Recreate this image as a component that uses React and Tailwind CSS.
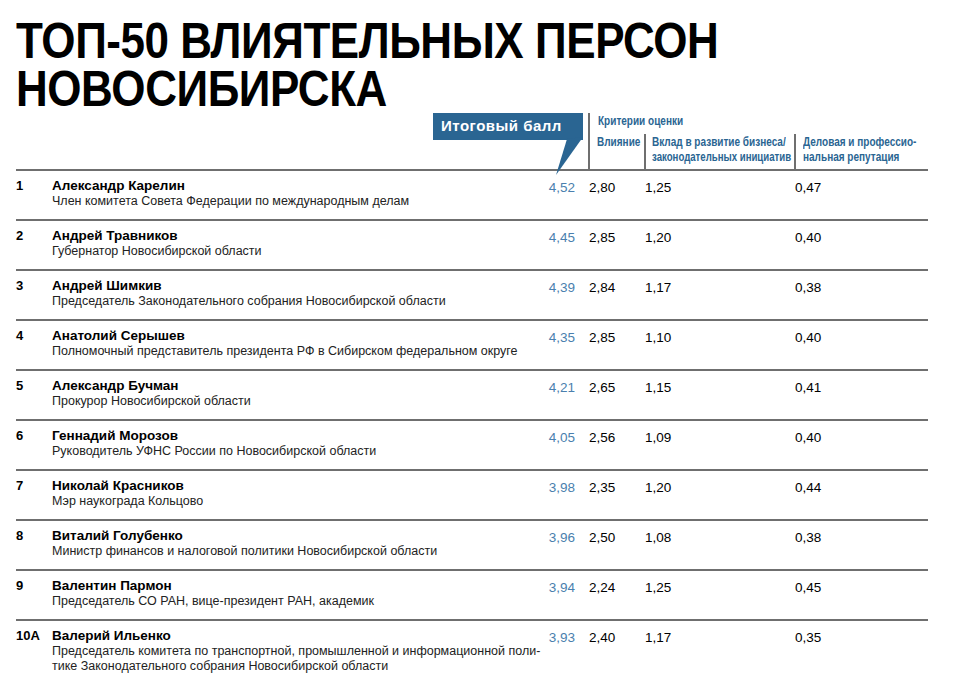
import React from "react";

const rows = [
  ["1", "Александр Карелин", ["Член комитета Совета Федерации по международным делам"], "4,52", "2,80", "1,25", "0,47"],
  ["2", "Андрей Травников", ["Губернатор Новосибирской области"], "4,45", "2,85", "1,20", "0,40"],
  ["3", "Андрей Шимкив", ["Председатель Законодательного собрания Новосибирской области"], "4,39", "2,84", "1,17", "0,38"],
  ["4", "Анатолий Серышев", ["Полномочный представитель президента РФ в Сибирском федеральном округе"], "4,35", "2,85", "1,10", "0,40"],
  ["5", "Александр Бучман", ["Прокурор Новосибирской области"], "4,21", "2,65", "1,15", "0,41"],
  ["6", "Геннадий Морозов", ["Руководитель УФНС России по Новосибирской области"], "4,05", "2,56", "1,09", "0,40"],
  ["7", "Николай Красников", ["Мэр наукограда Кольцово"], "3,98", "2,35", "1,20", "0,44"],
  ["8", "Виталий Голубенко", ["Министр финансов и налоговой политики Новосибирской области"], "3,96", "2,50", "1,08", "0,38"],
  ["9", "Валентин Пармон", ["Председатель СО РАН, вице-президент РАН, академик"], "3,94", "2,24", "1,25", "0,45"],
  ["10А", "Валерий Ильенко", ["Председатель комитета по транспортной, промышленной и информационной поли-", "тике Законодательного собрания Новосибирской области"], "3,93", "2,40", "1,17", "0,35"],
];

function Cond({ children }) {
  return (
    <span className="inline-block origin-left scale-x-[0.77] whitespace-nowrap">{children}</span>
  );
}

function CondTight({ children }) {
  return (
    <span className="inline-block origin-left scale-x-[0.74] whitespace-nowrap">{children}</span>
  );
}

export default function App() {
  return (
    <div className="w-[957px] h-[673px] overflow-hidden bg-white pl-4 text-black" style={{ fontFamily: '"Liberation Sans", Arial, sans-serif' }}>
      <div className="w-[912px]">
        <h1 className="pt-[17px] text-[50px] leading-[48px] font-bold tracking-[-0.5px] text-black whitespace-nowrap">
          <span className="inline-block origin-left scale-x-[0.88]">ТОП-50 ВЛИЯТЕЛЬНЫХ ПЕРСОН</span>
          <br />
          <span className="inline-block origin-left scale-x-[0.88]">НОВОСИБИРСКА</span>
        </h1>

        <div className="flex h-[56px] items-start">
          <div className="w-[417px] shrink-0" />
          <div className="relative w-[150px] h-[27px] shrink-0 bg-[#2a6592]">
            <div className="pl-[8px] pt-[3px] text-[15px] leading-[20px] font-bold tracking-[0.5px] text-white whitespace-nowrap">
              Итоговый балл
            </div>
            <svg className="absolute left-0 top-0 overflow-visible" width="150" height="64" viewBox="0 0 150 64">
              <polygon points="134,26 150,24 123,62" fill="#2a6592" />
            </svg>
          </div>
          <div className="w-[5px] shrink-0" />
          <div className="flex-1 h-full border-l-2 border-[#6f6f6f] flex flex-col text-[#2a6592] font-bold">
            <div className="h-[20px] pl-[8px] text-[13px] leading-[14px] pt-[1px]">
              <Cond>Критерии оценки</Cond>
            </div>
            <div className="flex flex-1 text-[13px] leading-[15px] pt-[1px]">
              <div className="w-[54px] pl-[7px]">
                <Cond>Влияние</Cond>
              </div>
              <div className="w-[150px] border-l-2 border-[#6f6f6f] pl-[6px]">
                <Cond>Вклад в развитие бизнеса/</Cond>
                <br />
                <CondTight>законодательных инициатив</CondTight>
              </div>
              <div className="flex-1 border-l-2 border-[#6f6f6f] pl-[7px]">
                <Cond>Деловая и профессио-</Cond>
                <br />
                <Cond>нальная репутация</Cond>
              </div>
            </div>
          </div>
        </div>

        {rows.map((r) => (
          <div key={r[0]} className="border-t-2 border-[#6f6f6f] h-[50px]">
            <div className="grid grid-cols-[36px_488px_48px_56px_150px_1fr] pt-[7px]">
              <div className="text-[13px] leading-[15px] font-bold">{r[0]}</div>
              <div>
                <div className="text-[13.5px] leading-[15px] font-bold whitespace-nowrap">{r[1]}</div>
                <div className="text-[12.5px] leading-[15px] text-[#222] pt-[1px] whitespace-nowrap">
                  {r[2].map((l, i) => (
                    <div key={i}>{l}</div>
                  ))}
                </div>
              </div>
              <div className="text-right pr-[13px] text-[13.5px] leading-[15px] text-[#4a7fae] pt-[2px]">{r[3]}</div>
              <div className="text-[13.5px] leading-[15px] pt-[2px] pl-[1px]">{r[4]}</div>
              <div className="text-[13.5px] leading-[15px] pt-[2px] pl-[1px]">{r[5]}</div>
              <div className="text-[13.5px] leading-[15px] pt-[2px] pl-[1px]">{r[6]}</div>
            </div>
          </div>
        ))}
      </div>
    </div>
  );
}
